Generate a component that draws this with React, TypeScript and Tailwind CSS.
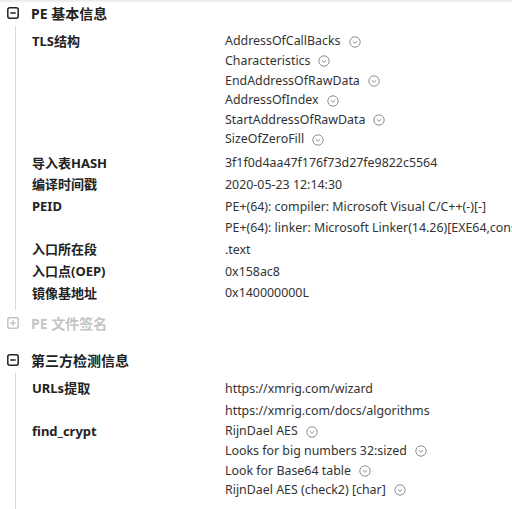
import React from 'react';

const font = { fontFamily: '"Noto Sans", "Noto Sans CJK SC", sans-serif' };

const Chevron = () => (
  <svg width="12" height="12" viewBox="0 0 12 12" className="ml-[8px] shrink-0 text-[#808080]">
    <circle cx="6" cy="6" r="5.2" fill="none" stroke="currentColor" strokeWidth="0.9" />
    <path d="M3.8 5.2 L6 7.3 L8.2 5.2" fill="none" stroke="currentColor" strokeWidth="0.9" />
  </svg>
);

const BoxIcon = ({ open, muted }: { open: boolean; muted?: boolean }) => (
  <svg width="12" height="12" viewBox="0 0 12 12" className={muted ? 'text-[#c4c4c4]' : 'text-[#222]'}>
    <rect x="0.8" y="0.8" width="10.4" height="10.4" rx="2" fill="none" stroke="currentColor" strokeWidth="1.5" />
    <path d="M3.3 6 H8.7" stroke="currentColor" strokeWidth="1.5" />
    {!open && <path d="M6 3.3 V8.7" stroke="currentColor" strokeWidth="1.5" />}
  </svg>
);

type Row = { label: string; values: string[]; chevron?: boolean };

const basic: Row[] = [
  {
    label: 'TLS结构',
    chevron: true,
    values: [
      'AddressOfCallBacks',
      'Characteristics',
      'EndAddressOfRawData',
      'AddressOfIndex',
      'StartAddressOfRawData',
      'SizeOfZeroFill',
    ],
  },
  { label: '导入表HASH', values: ['3f1f0d4aa47f176f73d27fe9822c5564'] },
  { label: '编译时间戳', values: ['2020-05-23 12:14:30'] },
  {
    label: 'PEID',
    values: [
      'PE+(64): compiler: Microsoft Visual C/C++(-)[-]',
      'PE+(64): linker: Microsoft Linker(14.26)[EXE64,console]',
    ],
  },
  { label: '入口所在段', values: ['.text'] },
  { label: '入口点(OEP)', values: ['0x158ac8'] },
  { label: '镜像基地址', values: ['0x140000000L'] },
];

const third: Row[] = [
  { label: 'URLs提取', values: ['https://xmrig.com/wizard', 'https://xmrig.com/docs/algorithms'] },
  {
    label: 'find_crypt',
    chevron: true,
    values: [
      'RijnDael AES',
      'Looks for big numbers 32:sized',
      'Look for Base64 table',
      'RijnDael AES (check2) [char]',
    ],
  },
];

const Rows = ({ rows, top }: { rows: Row[]; top: string }) => (
  <div className={`ml-[15px] border-l border-[#d9d9d9] pl-4 pb-[6px] ${top}`}>
    {rows.map((r) => (
      <div key={r.label} className={`flex ${r.chevron ? 'pb-[3px]' : ''}`}>
        <div
          className={`w-[193px] shrink-0 text-[13px] font-bold text-[#222] ${r.chevron ? 'leading-[19.6px]' : 'leading-[21.7px]'}`}
        >
          {r.label}
        </div>
        <div className="flex flex-col min-w-0">
          {r.values.map((v) => (
            <div
              key={v}
              className={`flex items-center whitespace-nowrap text-[12.4px] text-[#333] ${r.chevron ? 'h-[19.6px]' : 'h-[21.7px]'}`}
            >
              {v}
              {r.chevron && <Chevron />}
            </div>
          ))}
        </div>
      </div>
    ))}
  </div>
);

const Header = ({ title, open, muted }: { title: string; open: boolean; muted?: boolean }) => (
  <div className="flex items-center h-[26px] pl-[7px] gap-[12px]">
    <BoxIcon open={open} muted={muted} />
    <span className={`text-[14px] font-bold ${muted ? 'text-[#c4c4c4]' : 'text-[#222]'}`}>{title}</span>
  </div>
);

export default function App() {
  return (
    <div className="w-[512px] h-[509px] overflow-hidden bg-white relative" style={font}>
      <div className="absolute top-0 left-0 right-0 h-[3px] bg-gradient-to-b from-[#e6e6e6] to-white" />
      <Header title="PE 基本信息" open />
      <Rows rows={basic} top="pt-[6px]" />
      <Header title="PE 文件签名" open={false} muted />
      <div className="h-[11px]" />
      <Header title="第三方检测信息" open />
      <Rows rows={third} top="pt-[5px]" />
    </div>
  );
}
